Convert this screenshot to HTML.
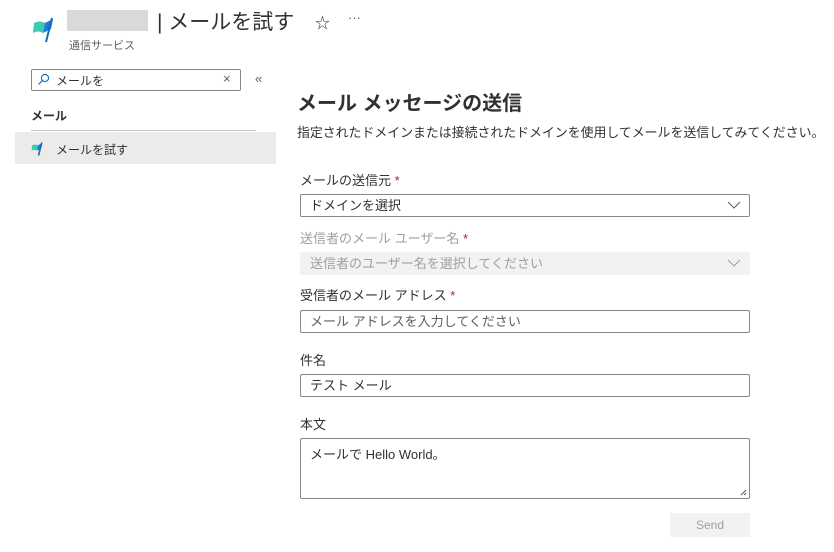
<!DOCTYPE html>
<html><head><meta charset="utf-8"><style>
*{box-sizing:border-box;margin:0;padding:0}
body{width:834px;height:552px;background:#fff;font-family:"Liberation Sans","Noto Sans CJK JP",sans-serif;color:#323130;position:relative;overflow:hidden;font-size:13px}
.a{position:absolute}
.lbl{position:absolute;left:300px;font-size:13px;color:#323130}
.req{color:#a4262c}
.box{position:absolute;left:300px;width:450px;height:23px;border:1px solid #8a8886;border-radius:2px;padding:0 9px;line-height:22px;font-size:13px}
.chev{position:absolute;right:8px;top:6px}
</style></head><body>
<svg class="a" style="left:32px;top:15px" width="26" height="28" viewBox="0 0 26 28"><path d="M2 8 Q8 5 13 8 L11 18 Q6 15 1 18Z" fill="#3ccbb0"/><path d="M13 8 Q17 6 21 4 L19 14 Q15 16 11 18Z" fill="#1d7ad8"/><path d="M20 3 L14 27" stroke="#0f6cbd" stroke-width="2"/></svg>
<div class="a" style="left:67px;top:10px;width:81px;height:21px;background:#d9d9d9"></div>
<div class="a" style="left:157px;top:6px;font-size:21px;color:#323130;white-space:nowrap">| メールを試す</div>
<div class="a" style="left:315px;top:12px;font-size:15px">☆</div>
<div class="a" style="left:348px;top:10px;font-size:13px;color:#605e5c">···</div>
<div class="a" style="left:69px;top:37px;font-size:11px;color:#605e5c">通信サービス</div>
<div class="a" style="left:31px;top:69px;width:210px;height:22px;border:1px solid #8a8886;border-radius:2px"></div>
<svg class="a" style="left:37px;top:73px" width="13" height="13" viewBox="0 0 13 13"><circle cx="8" cy="5" r="3.6" fill="none" stroke="#0f6cbd" stroke-width="1.1"/><path d="M5.3 7.7 L1.5 11.5" stroke="#0f6cbd" stroke-width="1.2"/></svg>
<div class="a" style="left:56px;top:72px;font-size:12px">メールを</div>
<div class="a" style="left:223px;top:71px;font-size:13px;color:#605e5c">×</div>
<div class="a" style="left:255px;top:71px;font-size:13px;color:#605e5c">«</div>
<div class="a" style="left:31px;top:107px;font-size:12px;font-weight:bold">メール</div>
<div class="a" style="left:31px;top:130px;width:225px;height:1px;background:#c8c6c4"></div>
<div class="a" style="left:15px;top:132px;width:261px;height:32px;background:#edebe9"></div>
<svg class="a" style="left:31px;top:141px" width="14" height="15" viewBox="0 0 26 28"><path d="M2 8 Q8 5 13 8 L11 18 Q6 15 1 18Z" fill="#3ccbb0"/><path d="M13 8 Q17 6 21 4 L19 14 Q15 16 11 18Z" fill="#1d7ad8"/><path d="M20 3 L14 27" stroke="#0f6cbd" stroke-width="3"/></svg>
<div class="a" style="left:56px;top:141px;font-size:12px">メールを試す</div>
<div class="a" style="left:297px;top:87px;font-size:20px;font-weight:bold;white-space:nowrap">メール メッセージの送信</div>
<div class="a" style="left:297px;top:122px;font-size:12.9px;white-space:nowrap">指定されたドメインまたは接続されたドメインを使用してメールを送信してみてください。</div>
<div class="lbl" style="top:170px">メールの送信元 <span class="req">*</span></div>
<div class="box" style="top:194px">ドメインを選択<svg class="chev" width="14" height="9"><path d="M1 1 L7 7 L13 1" fill="none" stroke="#605e5c"/></svg></div>
<div class="lbl" style="top:228px;color:#a19f9d">送信者のメール ユーザー名 <span class="req">*</span></div>
<div class="box" style="top:252px;border-color:#f3f2f1;background:#f3f2f1;color:#a19f9d">送信者のユーザー名を選択してください<svg class="chev" width="14" height="9"><path d="M1 1 L7 7 L13 1" fill="none" stroke="#a19f9d"/></svg></div>
<div class="lbl" style="top:285px">受信者のメール アドレス <span class="req">*</span></div>
<div class="box" style="top:310px;color:#605e5c">メール アドレスを入力してください</div>
<div class="lbl" style="top:350px">件名</div>
<div class="box" style="top:374px">テスト メール</div>
<div class="lbl" style="top:414px">本文</div>
<div class="box" style="top:438px;height:61px;line-height:32px">メールで Hello World。<svg class="a" style="right:2px;bottom:2px" width="7" height="7"><path d="M6 1 L1 6 M6 4 L4 6" stroke="#605e5c"/></svg></div>
<div class="a" style="left:670px;top:513px;width:80px;height:24px;background:#f3f2f1;color:#a19f9d;font-size:12px;text-align:center;line-height:24px">Send</div>
</body></html>
